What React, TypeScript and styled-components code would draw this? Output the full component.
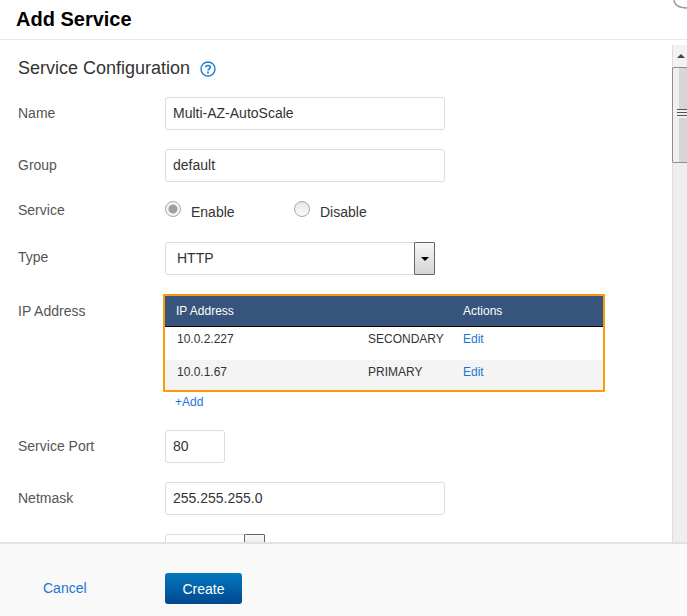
import React from "react";
import styled, { createGlobalStyle } from "styled-components";

const GlobalStyle = createGlobalStyle`
  html, body {
    margin: 0;
    padding: 0;
    background: #ffffff;
  }
  body {
    font-family: "Liberation Sans", Arial, sans-serif;
    color: #333333;
    overflow: hidden;
  }
`;

const Dialog = styled.div`
  position: relative;
  width: 687px;
  height: 616px;
  display: flex;
  flex-direction: column;
  overflow: hidden;
`;

const Header = styled.div`
  height: 39px;
  flex: none;
  box-sizing: content-box;
  border-bottom: 1px solid #e8e8e8;
  padding-left: 16px;
`;

const HeaderTitle = styled.h1`
  margin: 0;
  font-size: 20px;
  line-height: 38px;
  font-weight: bold;
  color: #000000;
`;

const CloseMark = styled.svg`
  position: absolute;
  top: 0;
  right: 0;
`;

const Body = styled.div`
  height: 502px;
  flex: none;
  display: flex;
  overflow: hidden;
`;

const Content = styled.div`
  flex: 1;
  min-width: 0;
  padding: 18px 0 0 18px;
`;

const SectionTitle = styled.div`
  height: 39px;
  display: flex;
  align-items: flex-start;
  gap: 10px;
  font-size: 18px;
  line-height: 20px;
  color: #333333;
`;

const HelpIcon = styled.svg`
  margin-top: 3px;
`;

const Row = styled.div<{ $h: number; $mb: number }>`
  display: flex;
  height: ${(p) => p.$h}px;
  margin-bottom: ${(p) => p.$mb}px;
`;

const Label = styled.div<{ $top?: number }>`
  width: 147px;
  flex: none;
  padding-top: ${(p) => p.$top ?? 8}px;
  font-size: 14px;
  line-height: 16px;
  color: #555555;
`;

const Field = styled.div<{ $w: number }>`
  width: ${(p) => p.$w}px;
  height: 33px;
  box-sizing: border-box;
  border: 1px solid #dcdcdc;
  border-radius: 3px;
  padding-left: 7px;
  font-size: 14px;
  line-height: 31px;
  color: #333333;
  background: #ffffff;
`;

const SelectBox = styled(Field)`
  position: relative;
  padding-left: 11px;
`;

const SelectArrow = styled.div`
  position: absolute;
  top: -1px;
  right: -1px;
  width: 21px;
  height: 33px;
  box-sizing: border-box;
  border: 1px solid #666666;
  border-radius: 1px;
  background: linear-gradient(#f6f6f6, #d4d4d4);
  display: flex;
  align-items: center;
  justify-content: center;

  &::after {
    content: "";
    border-left: 4px solid transparent;
    border-right: 4px solid transparent;
    border-top: 4px solid #000000;
  }
`;

const RadioGroup = styled.div`
  display: flex;
  padding-top: 1px;
`;

const RadioItem = styled.div`
  width: 129px;
  display: flex;
  align-items: flex-start;
  font-size: 14px;
  line-height: 16px;
  color: #333333;
`;

const RadioDot = styled.span<{ $on?: boolean }>`
  width: 16px;
  height: 16px;
  flex: none;
  box-sizing: border-box;
  margin-right: 10px;
  margin-top: -1px;
  border-radius: 50%;
  border: 1px solid #a8a8a8;
  background: ${(p) =>
    p.$on
      ? "radial-gradient(circle, #a0a0a0 0 4px, #f4f4f4 5px)"
      : "linear-gradient(#e6e6e6, #fbfbfb)"};
`;

const RadioText = styled.span`
  padding-top: 2px;
`;

const TableFrame = styled.div`
  width: 442px;
  height: 98px;
  box-sizing: border-box;
  margin-left: -2px;
  border: 2px solid #fb9a0c;
  display: flex;
  flex-direction: column;
`;

const TableRow = styled.div<{ $kind: "head" | "plain" | "alt" }>`
  display: grid;
  grid-template-columns: ${(p) => (p.$kind === "head" ? "192px 95px" : "191px 95px")} 1fr;
  box-sizing: border-box;
  height: ${(p) => (p.$kind === "head" ? 31 : p.$kind === "plain" ? 33 : 30)}px;
  padding-left: ${(p) => (p.$kind === "head" ? 11 : 12)}px;
  padding-top: ${(p) => (p.$kind === "head" ? 7 : 4)}px;
  font-size: 12px;
  line-height: 16px;
  background: ${(p) =>
    p.$kind === "head" ? "#36547c" : p.$kind === "alt" ? "#f4f4f4" : "#ffffff"};
  color: ${(p) => (p.$kind === "head" ? "#ffffff" : "#333333")};
  border-bottom: ${(p) => (p.$kind === "head" ? "1px solid #000000" : "none")};
`;

const LinkText = styled.span`
  color: #1a76d2;
`;

const AddLink = styled.div`
  margin: 3px 0 0 10px;
  font-size: 12px;
  line-height: 14px;
  color: #1a76d2;
`;

const IpColumn = styled.div`
  display: flex;
  flex-direction: column;
`;

const Scrollbar = styled.div`
  width: 14px;
  flex: none;
  margin-top: 5px;
  display: flex;
  flex-direction: column;
  border-left: 1px solid #dddddd;
  background: #eeeeee;
`;

const ScrollUp = styled.div`
  height: 22px;
  flex: none;
  background: #f2f2f2;
  padding: 9px 0 0 4px;
  box-sizing: border-box;

  &::after {
    content: "";
    display: block;
    width: 0;
    border-left: 4px solid transparent;
    border-right: 4px solid transparent;
    border-bottom: 4px solid #444444;
  }
`;

const ScrollThumb = styled.div`
  position: relative;
  height: 96px;
  flex: none;
  margin-left: -1px;
  box-sizing: border-box;
  border: 1px solid #8e8e8e;
  border-right: none;
  border-radius: 2px 0 0 2px;
  background: linear-gradient(90deg, #f0f0f0 0 6px, #d6d6d6 6px);

  &::after {
    content: "";
    position: absolute;
    left: 4px;
    top: 41px;
    width: 10px;
    height: 9px;
    background: repeating-linear-gradient(#555555 0 1px, #f0f0f0 1px 3px);
  }
`;

const Footer = styled.div`
  flex: 1;
  box-sizing: border-box;
  border-top: 2px solid #e2e2e2;
  background: #f9f9f9;
  display: flex;
  align-items: flex-start;
  padding: 29px 0 0 43px;
`;

const CancelLink = styled.div`
  width: 122px;
  font-size: 14px;
  line-height: 31px;
  color: #1a76d2;
`;

const CreateButton = styled.button`
  width: 77px;
  height: 31px;
  padding: 0;
  border: none;
  border-radius: 3px;
  background: linear-gradient(#0578bd, #00488f);
  color: #ffffff;
  font-family: inherit;
  font-size: 14px;
`;

export default function App() {
  return (
    <Dialog>
      <GlobalStyle />
      <Header>
        <HeaderTitle>Add Service</HeaderTitle>
      </Header>
      <CloseMark width="14" height="10" viewBox="0 0 14 10">
        <path d="M1 0 C1.5 5 5 8 14 8" fill="none" stroke="#9a9a9a" strokeWidth="1.4" />
      </CloseMark>
      <Body>
        <Content>
          <SectionTitle>
            Service Configuration
            <HelpIcon width="16" height="16" viewBox="0 0 16 16">
              <circle cx="8" cy="8" r="7" fill="none" stroke="#1a7fd0" strokeWidth="1.4" />
              <path d="M5.7 6.2 C5.8 3.9 10.3 3.9 10.3 6.3 C10.3 8 8 7.8 8 9.6" fill="none" stroke="#1a7fd0" strokeWidth="1.7" />
              <rect x="7.1" y="10.6" width="1.8" height="1.8" fill="#1a7fd0" />
            </HelpIcon>
          </SectionTitle>
          <Row $h={33} $mb={19}>
            <Label>Name</Label>
            <Field $w={280}>Multi-AZ-AutoScale</Field>
          </Row>
          <Row $h={33} $mb={19}>
            <Label>Group</Label>
            <Field $w={280}>default</Field>
          </Row>
          <Row $h={35} $mb={6}>
            <Label $top={1}>Service</Label>
            <RadioGroup>
              <RadioItem>
                <RadioDot $on />
                <RadioText>Enable</RadioText>
              </RadioItem>
              <RadioItem>
                <RadioDot />
                <RadioText>Disable</RadioText>
              </RadioItem>
            </RadioGroup>
          </Row>
          <Row $h={33} $mb={19}>
            <Label $top={7}>Type</Label>
            <SelectBox $w={270}>
              HTTP
              <SelectArrow />
            </SelectBox>
          </Row>
          <Row $h={117} $mb={19}>
            <Label $top={9}>IP Address</Label>
            <IpColumn>
              <TableFrame>
                <TableRow $kind="head">
                  <span>IP Address</span>
                  <span />
                  <span>Actions</span>
                </TableRow>
                <TableRow $kind="plain">
                  <span>10.0.2.227</span>
                  <span>SECONDARY</span>
                  <LinkText>Edit</LinkText>
                </TableRow>
                <TableRow $kind="alt">
                  <span>10.0.1.67</span>
                  <span>PRIMARY</span>
                  <LinkText>Edit</LinkText>
                </TableRow>
              </TableFrame>
              <AddLink>+Add</AddLink>
            </IpColumn>
          </Row>
          <Row $h={33} $mb={19}>
            <Label>Service Port</Label>
            <Field $w={60}>80</Field>
          </Row>
          <Row $h={33} $mb={19}>
            <Label>Netmask</Label>
            <Field $w={280}>255.255.255.0</Field>
          </Row>
          <Row $h={33} $mb={0}>
            <Label />
            <SelectBox $w={100}>
              <SelectArrow />
            </SelectBox>
          </Row>
        </Content>
        <Scrollbar>
          <ScrollUp />
          <ScrollThumb />
        </Scrollbar>
      </Body>
      <Footer>
        <CancelLink>Cancel</CancelLink>
        <CreateButton>Create</CreateButton>
      </Footer>
    </Dialog>
  );
}
